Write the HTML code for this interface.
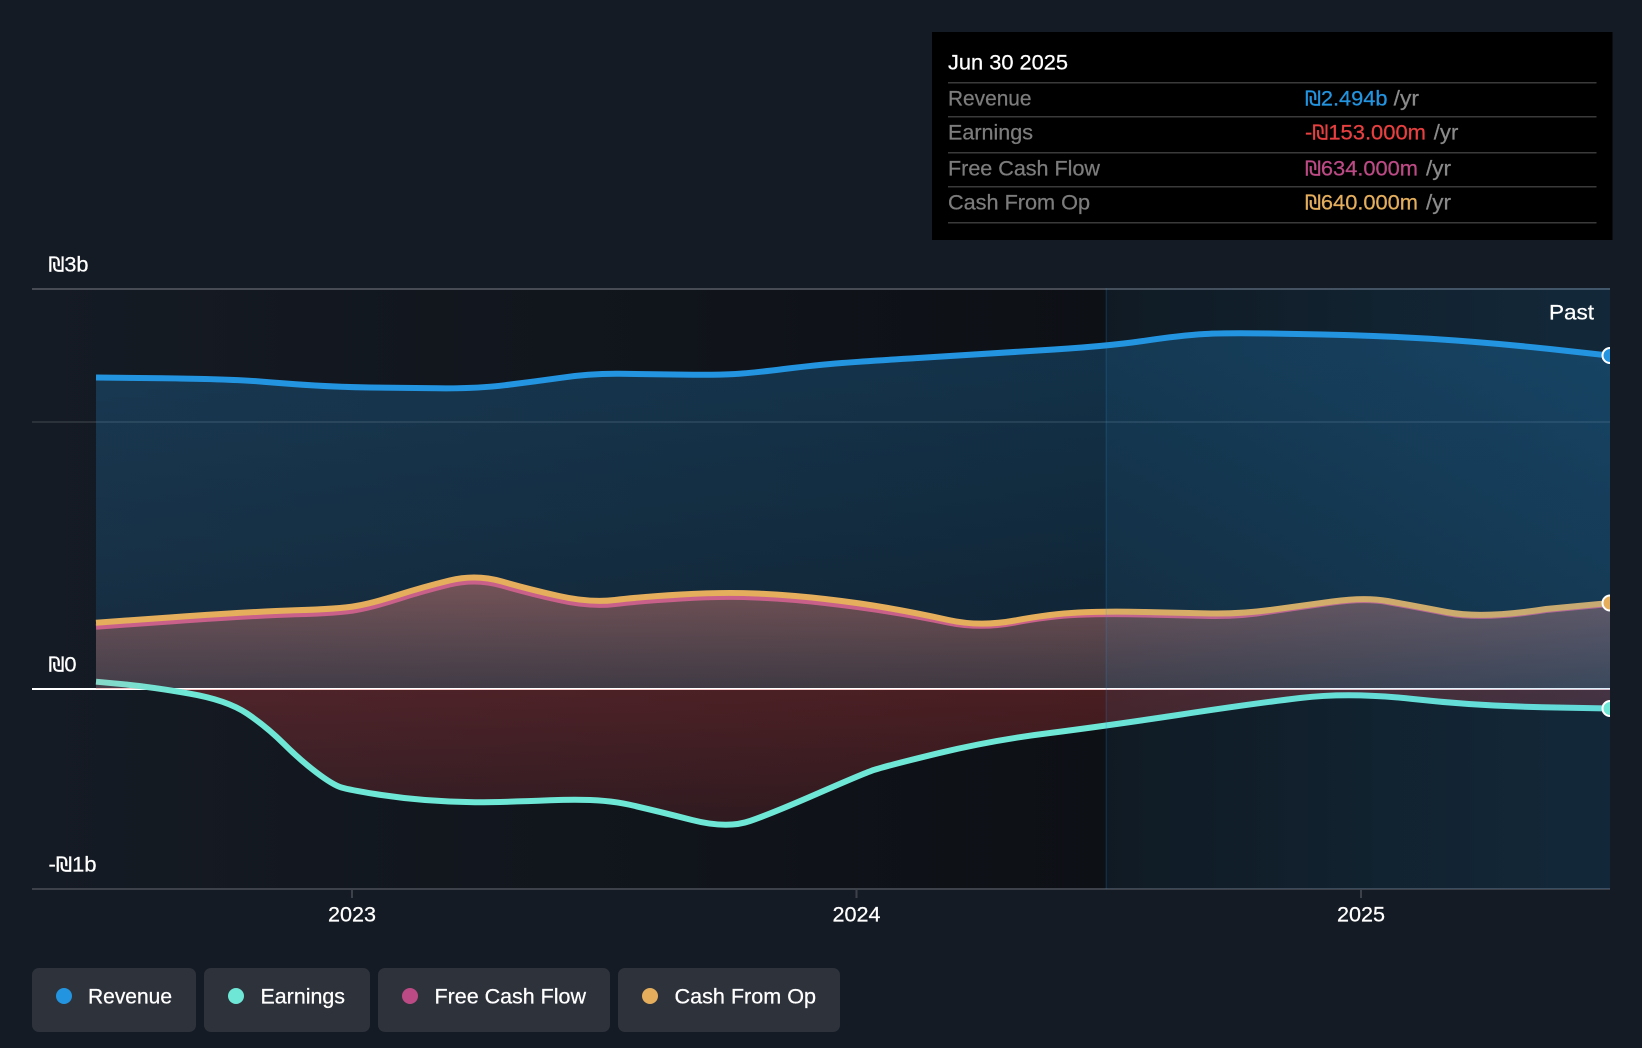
<!DOCTYPE html>
<html lang="en">
<head>
<meta charset="utf-8">
<title>Revenue and Earnings</title>
<style>
html,body{margin:0;padding:0;background:#151b24;width:1642px;height:1048px;overflow:hidden}
svg{display:block}
text{font-family:"Liberation Sans","DejaVu Sans",sans-serif;font-size:21.5px;color:#fff;fill:currentColor;stroke:currentColor;stroke-width:.25px}
tspan.s{font-family:"DejaVu Sans",sans-serif;font-size:20px}
.l{color:#7c7c7c}
.u{color:#8a8a8a}
</style>
</head>
<body>
<svg width="1642" height="1048" viewBox="0 0 1642 1048" xmlns="http://www.w3.org/2000/svg">
<defs>
<linearGradient id="dark" gradientUnits="userSpaceOnUse" x1="32" y1="0" x2="1106" y2="0">
<stop offset="0" stop-color="#151b24"/><stop offset="1" stop-color="#0d1015"/>
</linearGradient>
<linearGradient id="past" gradientUnits="userSpaceOnUse" x1="1106" y1="0" x2="1610" y2="0">
<stop offset="0" stop-color="#2394e0" stop-opacity=".05"/><stop offset="1" stop-color="#2394e0" stop-opacity=".16"/>
</linearGradient>
<linearGradient id="rev" gradientUnits="userSpaceOnUse" x1="0" y1="355" x2="0" y2="689">
<stop offset="0" stop-color="#2394e0" stop-opacity=".25"/><stop offset="1" stop-color="#2394e0" stop-opacity=".14"/>
</linearGradient>
<linearGradient id="cash" gradientUnits="userSpaceOnUse" x1="0" y1="580" x2="0" y2="689">
<stop offset="0" stop-color="#cd786e" stop-opacity=".52"/><stop offset="1" stop-color="#cd786e" stop-opacity=".24"/>
</linearGradient>
<linearGradient id="neg" gradientUnits="userSpaceOnUse" x1="0" y1="689" x2="0" y2="889">
<stop offset="0" stop-color="#e64141" stop-opacity=".28"/><stop offset="1" stop-color="#e64141" stop-opacity=".08"/>
</linearGradient>
<linearGradient id="teal" gradientUnits="userSpaceOnUse" x1="96" y1="0" x2="180" y2="0">
<stop offset="0" stop-color="#86d8c8"/><stop offset="1" stop-color="#6ee7d6"/>
</linearGradient>
<clipPath id="below"><rect x="96" y="688" width="1514" height="201"/></clipPath>
<clipPath id="plot"><rect x="32" y="280" width="1578" height="620"/></clipPath>
</defs>

<rect x="0" y="0" width="1642" height="1048" fill="#151b24"/>
<rect x="32" y="288" width="1074" height="601" fill="url(#dark)"/>
<rect x="1106" y="288" width="504" height="601" fill="#0f141a"/>

<rect x="32" y="421" width="1578" height="2" fill="#fff" fill-opacity=".1"/>

<path fill="url(#rev)" d="M96,377.5 L163,378.2 Q230,379 260,381.5 Q290,384 315,385.5 Q340,387 370,387.5 Q400,388 438,388.3 Q477,388.7 505,385.2 Q533,381.7 561,377.8 Q590,373.5 620,373.8 Q650,374.3 683,374.6 Q717,375 733,374.1 Q750,373.3 783,369.1 Q817,365 842,363 Q867,361 918,358 Q970,355 1038,350.5 Q1106,346.5 1143,341 Q1180,335.5 1205,334 Q1230,332.5 1297,334 Q1368,335 1430,338.8 Q1491,342.7 1550,349 L1610,355.7 L1610,689 L96,689 Z"/>
<path fill="url(#cash)" d="M96,626.7 L173,621.2 Q250,615.7 295,614.3 Q340,613 356,610 Q373,607 398,599 Q423,591 449.5,584.5 Q476,578 502,585.5 Q528,593 559,600 Q590,607 615,604 Q640,601 681,598.5 Q723,596 756,597.5 Q790,599 825,603 Q860,607 888,611.5 Q917,616 948.5,622.5 Q980,629 1015,622.5 Q1050,616 1078.5,614.8 Q1107,613.5 1145,614.5 Q1183,615.5 1211,616 Q1240,616.5 1270,611.5 Q1300,607 1332.5,602.5 Q1365,598 1387.5,602 Q1410,606 1446.5,613 Q1483,620 1546,610 L1610,604 L1610,689 L96,689 Z"/>

<rect x="32" y="288" width="1578" height="2" fill="#474b54"/>
<rect x="32" y="888" width="1578" height="2" fill="#3d414a"/>
<rect x="351" y="889" width="2" height="9" fill="#3d414a"/>
<rect x="855.5" y="889" width="2" height="9" fill="#3d414a"/>
<rect x="1360" y="889" width="2" height="9" fill="#3d414a"/>
<rect x="32" y="688" width="1578" height="2" fill="#fff"/>

<path clip-path="url(#below)" fill="url(#neg)" d="M96,681.7 L123,684.2 Q150,686.7 188.5,693.4 Q227,700 247,713.5 Q267,727 283.5,743.5 Q300,760 316.5,772.5 Q333,785 341.5,787.5 Q350,790 375,794 Q400,798 425,800 Q450,802 475,802.2 Q500,802.3 550,800.3 Q600,798 628.5,804.5 Q657,811 692,820 Q727,829 750,821 Q773,813 816.5,794 Q860,775 871.5,770.8 Q883,766.7 938,753.3 Q993,740 1050,733 Q1107,725.7 1178,715 Q1250,704 1300,698 Q1350,692 1413,699 Q1476,706 1543,707.2 L1610,708.5 L1610,689 L96,689 Z"/>

<g clip-path="url(#plot)" fill="none" stroke-width="6" stroke-linejoin="round">
<path stroke="#2394e0" d="M96,377.5 L163,378.2 Q230,379 260,381.5 Q290,384 315,385.5 Q340,387 370,387.5 Q400,388 438,388.3 Q477,388.7 505,385.2 Q533,381.7 561,377.8 Q590,373.5 620,373.8 Q650,374.3 683,374.6 Q717,375 733,374.1 Q750,373.3 783,369.1 Q817,365 842,363 Q867,361 918,358 Q970,355 1038,350.5 Q1106,346.5 1143,341 Q1180,335.5 1205,334 Q1230,332.5 1297,334 Q1368,335 1430,338.8 Q1491,342.7 1550,349 L1610,355.7"/>
<path stroke="#c9608a" d="M96,626.7 L173,621.2 Q250,615.7 295,614.3 Q340,613 356,610 Q373,607 398,599 Q423,591 449.5,584.5 Q476,578 502,585.5 Q528,593 559,600 Q590,607 615,604 Q640,601 681,598.5 Q723,596 756,597.5 Q790,599 825,603 Q860,607 888,611.5 Q917,616 948.5,622.5 Q980,629 1015,622.5 Q1050,616 1078.5,614.8 Q1107,613.5 1145,614.5 Q1183,615.5 1211,616 Q1240,616.5 1270,611.5 Q1300,607 1332.5,602.5 Q1365,598 1387.5,602 Q1410,606 1446.5,613 Q1483,620 1546,610 L1610,604"/>
<path stroke="#e4ae5d" d="M96,622.7 L173,617.2 Q250,611.7 295,610.3 Q340,609 356,606 Q373,603 398,595 Q423,587 449.5,580.5 Q476,574 502,581.5 Q528,589 559,596 Q590,603 615,600 Q640,597 681,594.5 Q723,592 756,593.5 Q790,595 825,599 Q860,603 888,608 Q917,613 948.5,620 Q980,627 1015,620.5 Q1050,614 1078.5,612.5 Q1107,611 1145,612 Q1183,613 1211,613.5 Q1240,614 1270,610 Q1300,606 1332.5,601.5 Q1365,597 1387.5,601 Q1410,605 1446.5,612 Q1483,619 1546,609 L1610,603"/>
<path stroke="url(#teal)" d="M96,681.7 L123,684.2 Q150,686.7 188.5,693.4 Q227,700 247,713.5 Q267,727 283.5,743.5 Q300,760 316.5,772.5 Q333,785 341.5,787.5 Q350,790 375,794 Q400,798 425,800 Q450,802 475,802.2 Q500,802.3 550,800.3 Q600,798 628.5,804.5 Q657,811 692,820 Q727,829 750,821 Q773,813 816.5,794 Q860,775 871.5,770.8 Q883,766.7 938,753.3 Q993,740 1050,733 Q1107,725.7 1178,715 Q1250,704 1300,698 Q1350,692 1413,699 Q1476,706 1543,707.2 L1610,708.5"/>
</g>

<rect x="1106" y="288" width="504" height="601" fill="url(#past)"/>
<rect x="1105.5" y="288" width="1.5" height="601" fill="#2394e0" fill-opacity=".16"/>

<g clip-path="url(#plot)" stroke="#fff" stroke-width="2">
<circle cx="1610" cy="355.5" r="7.5" fill="#2394e0"/>
<circle cx="1610" cy="603" r="7.5" fill="#e4ae5d"/>
<circle cx="1610" cy="708.5" r="7.5" fill="#6ee7d6"/>
</g>

<text x="48.5" y="271.5" textLength="40" lengthAdjust="spacingAndGlyphs"><tspan class="s">₪</tspan>3b</text>
<text x="48.5" y="671.5" textLength="28" lengthAdjust="spacingAndGlyphs"><tspan class="s">₪</tspan>0</text>
<text x="48.5" y="871.5" textLength="48" lengthAdjust="spacingAndGlyphs">-<tspan class="s">₪</tspan>1b</text>
<text x="1549" y="319.5" textLength="45" lengthAdjust="spacingAndGlyphs">Past</text>
<text x="328" y="921.5" textLength="48" lengthAdjust="spacingAndGlyphs">2023</text>
<text x="832.5" y="921.5" textLength="48" lengthAdjust="spacingAndGlyphs">2024</text>
<text x="1337" y="921.5" textLength="48" lengthAdjust="spacingAndGlyphs">2025</text>

<rect x="932" y="32" width="680.5" height="208" fill="#000"/>
<g fill="#3a3a3a">
<rect x="948" y="82" width="648.5" height="1.5"/>
<rect x="948" y="116" width="648.5" height="1.5"/>
<rect x="948" y="152" width="648.5" height="1.5"/>
<rect x="948" y="186" width="648.5" height="1.5"/>
<rect x="948" y="222" width="648.5" height="1.5"/>
</g>
<text x="948" y="69.5" textLength="120" lengthAdjust="spacingAndGlyphs">Jun 30 2025</text>
<text class="l" x="948" y="105.5" textLength="83.5" lengthAdjust="spacingAndGlyphs">Revenue</text>
<text class="l" x="948" y="139.5" textLength="85" lengthAdjust="spacingAndGlyphs">Earnings</text>
<text class="l" x="948" y="175.5" textLength="152" lengthAdjust="spacingAndGlyphs">Free Cash Flow</text>
<text class="l" x="948" y="209.5" textLength="142" lengthAdjust="spacingAndGlyphs">Cash From Op</text>
<text x="1305" y="105.5" textLength="82.5" lengthAdjust="spacingAndGlyphs" style="color:#2394e0"><tspan class="s">₪</tspan>2.494b</text>
<text class="u" x="1393.7" y="105.5" textLength="25.3" lengthAdjust="spacingAndGlyphs">/yr</text>
<text x="1305" y="139.5" textLength="121" lengthAdjust="spacingAndGlyphs" style="color:#e84040">-<tspan class="s">₪</tspan>153.000m</text>
<text class="u" x="1433.8" y="139.5" textLength="24.5" lengthAdjust="spacingAndGlyphs">/yr</text>
<text x="1305" y="175.5" textLength="113" lengthAdjust="spacingAndGlyphs" style="color:#bc4a85"><tspan class="s">₪</tspan>634.000m</text>
<text class="u" x="1426" y="175.5" textLength="25" lengthAdjust="spacingAndGlyphs">/yr</text>
<text x="1305" y="209.5" textLength="113" lengthAdjust="spacingAndGlyphs" style="color:#e4ae5d"><tspan class="s">₪</tspan>640.000m</text>
<text class="u" x="1426" y="209.5" textLength="25" lengthAdjust="spacingAndGlyphs">/yr</text>

<g fill="#2e323b">
<rect x="32" y="968" width="164" height="64" rx="7"/>
<rect x="204" y="968" width="166" height="64" rx="7"/>
<rect x="378" y="968" width="232" height="64" rx="7"/>
<rect x="618" y="968" width="222" height="64" rx="7"/>
</g>
<circle cx="64" cy="996" r="8" fill="#2394e0"/>
<circle cx="236" cy="996" r="8" fill="#6ee7d6"/>
<circle cx="410" cy="996" r="8" fill="#bc4a85"/>
<circle cx="650" cy="996" r="8" fill="#e4ae5d"/>
<text x="88" y="1003.5" textLength="84" lengthAdjust="spacingAndGlyphs">Revenue</text>
<text x="260.5" y="1003.5" textLength="84.5" lengthAdjust="spacingAndGlyphs">Earnings</text>
<text x="434.5" y="1003.5" textLength="151.5" lengthAdjust="spacingAndGlyphs">Free Cash Flow</text>
<text x="674.5" y="1003.5" textLength="141.5" lengthAdjust="spacingAndGlyphs">Cash From Op</text>
</svg>
</body>
</html>
